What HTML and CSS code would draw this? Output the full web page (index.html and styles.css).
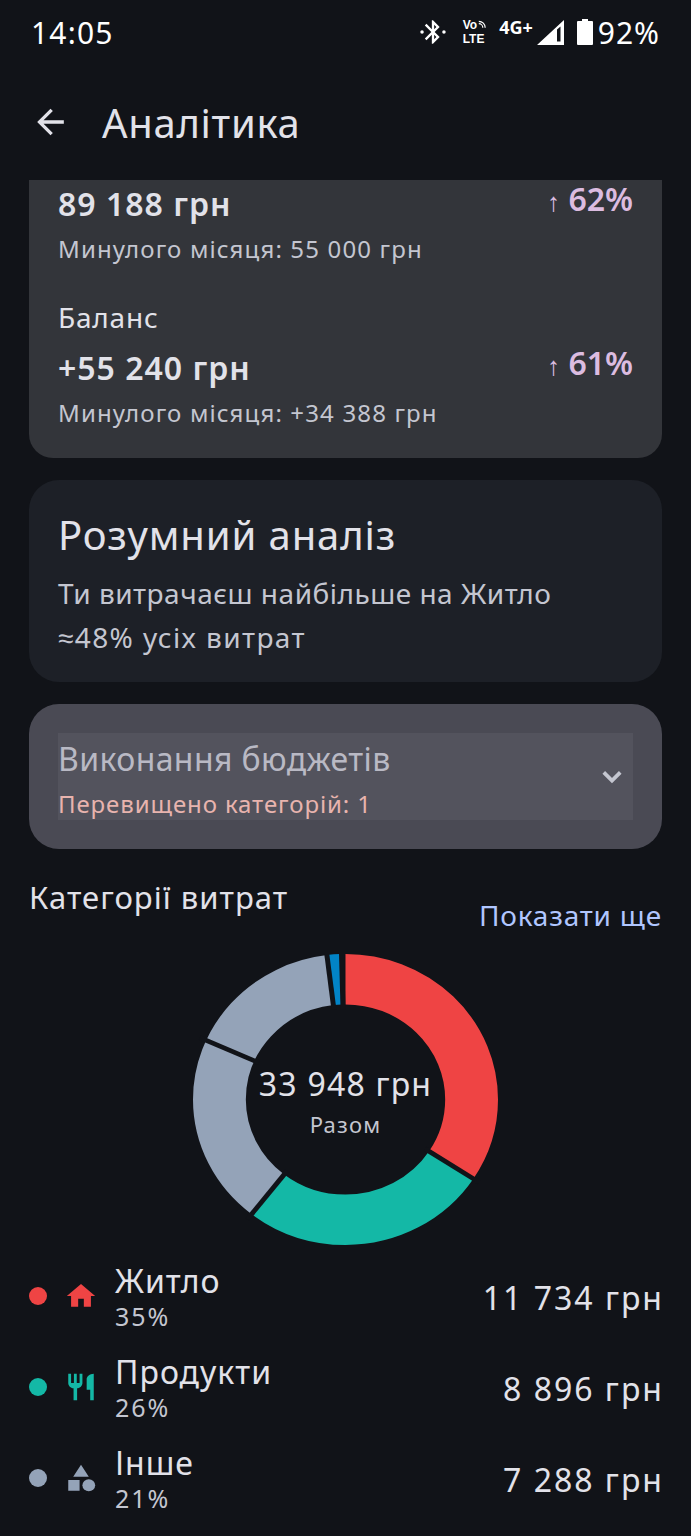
FILE: index.html
```html
<!DOCTYPE html>
<html lang="uk">

<head>
  <meta charset="utf-8">
  <link rel="stylesheet" href="styles.css">
  <title>Аналітика</title>
</head>

<body>
  <div class="status">
    <span class="clock">14:05</span>
    <div class="status-icons">
      <svg class="ic-bt" viewBox="0 0 24 24"><path d="M17.71 7.71L12 2h-1v7.59L6.41 5 5 6.41 10.59 12 5 17.59 6.41 19 11 14.41V22h1l5.71-5.71-4.3-4.29 4.3-4.29zM13 5.83l1.88 1.88L13 9.59V5.83zm1.88 10.46L13 18.17v-3.76l1.88 1.88z"/><circle cx="2.6" cy="12" r="1.5"/><circle cx="21.4" cy="12" r="1.5"/></svg>
      <span class="volte">Vo<svg class="ic-wave" viewBox="0 0 10 10"><path d="M1 4a5 5 0 0 1 5 5M1 1a8 8 0 0 1 8 8"/></svg><br>LTE</span>
      <span class="net">4G+</span>
      <svg class="ic-signal" viewBox="0 0 27 25"><path d="M0 25L27 0v25zM20 9.5L23.500 6.500v15H20z" fill-rule="evenodd"/></svg>
      <svg class="ic-batt" viewBox="0 0 16 26"><path d="M5 0h6v2h4a1 1 0 0 1 1 1v22a1 1 0 0 1-1 1H1a1 1 0 0 1-1-1V3a1 1 0 0 1 1-1h4z"/></svg>
      <span class="batt">92%</span>
    </div>
  </div>

  <div class="appbar">
    <svg class="back" viewBox="0 0 24 24"><path d="M20 11H7.83l5.59-5.59L12 4l-8 8 8 8 1.41-1.41L7.83 13H20v-2z"/></svg>
    <h1>Аналітика</h1>
  </div>

  <div class="content">
    <div class="card summary">
      <div class="sum-row cut">
        <div>
          <div class="sum-value">89 188 грн</div>
          <div class="sum-prev">Минулого місяця: 55 000 грн</div>
        </div>
        <div class="delta"><span class="arr">↑</span> 62%</div>
      </div>
      <div class="sum-row">
        <div>
          <div class="sum-label">Баланс</div>
          <div class="sum-value">+55 240 грн</div>
          <div class="sum-prev">Минулого місяця: +34 388 грн</div>
        </div>
        <div class="delta low"><span class="arr">↑</span> 61%</div>
      </div>
    </div>

    <div class="card smart">
      <h2>Розумний аналіз</h2>
      <p>Ти витрачаєш найбільше на Житло<br><span class="wide">≈48% усіх витрат</span></p>
    </div>

    <div class="card budget">
      <div class="budget-inner">
        <div>
          <div class="budget-title">Виконання бюджетів</div>
          <div class="budget-warn">Перевищено категорій: 1</div>
        </div>
        <svg class="chev" viewBox="0 0 24 24"><path d="M3 7l9 9 9-9" /></svg>
      </div>
    </div>

    <div class="cat-head">
      <span class="cat-title">Категорії витрат</span>
      <span class="cat-more">Показати ще</span>
    </div>

    <div class="donut">
      <svg viewBox="-153 -153 306 306" preserveAspectRatio="none">
        <g fill="none" stroke-width="53" transform="rotate(-90)">
          <circle r="126.5" pathLength="360" stroke="#ef4444" stroke-dasharray="123 237"/>
          <circle r="126.5" pathLength="360" stroke="#14b8a6" stroke-dasharray="95 265" stroke-dashoffset="-123"/>
          <circle r="126.5" pathLength="360" stroke="#94a3b8" stroke-dasharray="135 225" stroke-dashoffset="-218"/>
          <circle r="126.5" pathLength="360" stroke="#0284c7" stroke-dasharray="5 355" stroke-dashoffset="-353"/>
        </g>
        <g stroke="#111318" stroke-width="5">
          <line x1="0" y1="-95" x2="0" y2="-160" transform="rotate(123)"/>
          <line x1="0" y1="-95" x2="0" y2="-160" transform="rotate(218)"/>
          <line x1="0" y1="-95" x2="0" y2="-160" transform="rotate(294)"/>
          <line x1="0" y1="-95" x2="0" y2="-160" transform="rotate(353)"/>
          <line x1="0" y1="-95" x2="0" y2="-160" transform="rotate(358.500)"/>
        </g>
      </svg>
      <div class="donut-center">
        <div class="donut-sum">33 948 грн</div>
        <div class="donut-label">Разом</div>
      </div>
    </div>

    <div class="legend">
      <div class="leg-row">
        <span class="dot red"></span>
        <svg class="leg-ic red-ic" viewBox="0 0 24 24" preserveAspectRatio="none"><path d="M10 20v-6h4v6h5v-8h3L12 3 2 12h3v8z"/></svg>
        <div class="leg-text">
          <div class="leg-name">Житло</div>
          <div class="leg-pct">35%</div>
        </div>
        <div class="leg-sum">11 734 грн</div>
      </div>
      <div class="leg-row">
        <span class="dot teal"></span>
        <svg class="leg-ic teal-ic" viewBox="0 0 24 24" preserveAspectRatio="none"><path d="M11 9H9V2H7v7H5V2H3v7c0 2.12 1.66 3.84 3.75 3.97V22h2.5v-9.03C11.34 12.84 13 11.12 13 9V2h-2v7zm5-3v8h2.5v8H21V2c-2.76 0-5 2.24-5 4z"/></svg>
        <div class="leg-text">
          <div class="leg-name">Продукти</div>
          <div class="leg-pct">26%</div>
        </div>
        <div class="leg-sum">8 896 грн</div>
      </div>
      <div class="leg-row">
        <span class="dot gray"></span>
        <svg class="leg-ic gray-ic" viewBox="0 0 24 24" preserveAspectRatio="none"><path d="M12 2l-5.500 9h11zM3 13.500h8v8H3z"/><circle cx="17.500" cy="17.500" r="4.500"/></svg>
        <div class="leg-text">
          <div class="leg-name">Інше</div>
          <div class="leg-pct">21%</div>
        </div>
        <div class="leg-sum">7 288 грн</div>
      </div>
    </div>
  </div>
</body>

</html>
```

FILE: styles.css
```css
html,
body {
  margin: 0;
  height: 1536px;
  overflow: hidden;
  font-family: "Noto Sans", sans-serif;
  color: #e2e2e9;
  background-color: #111318;
}

/* status bar */
.status {
  height: 64px;
  display: flex;
  align-items: center;
  justify-content: space-between;
  padding: 0 31px;
  color: #fff;
}

.clock {
  font-size: 30px;
  letter-spacing: 1.2px;
}

.batt {
  font-size: 30px;
  letter-spacing: 1px;
}

.status-icons {
  display: flex;
  align-items: center;
}

.status-icons > svg {
  fill: #fff;
  display: block;
}

.ic-bt {
  width: 28px;
  height: 28px;
  margin-right: 16px;
}

.volte {
  font-family: "Liberation Sans", sans-serif;
  font-size: 12px;
  font-weight: 700;
  line-height: 14px;
  margin-right: 13px;
  white-space: nowrap;
}

.ic-wave {
  width: 8px;
  height: 9px;
  margin-left: 1px;
  fill: none;
  stroke: #fff;
  stroke-width: 1.5;
}

.net {
  font-size: 18px;
  font-weight: 700;
  margin-right: 4px;
  margin-top: -10px;
}

.ic-signal {
  width: 27px;
  height: 25px;
  margin-right: 13px;
}

.ic-batt {
  width: 16px;
  height: 26px;
  margin-right: 5px;
}

/* app bar */
.appbar {
  height: 116px;
  display: flex;
  align-items: center;
  padding-left: 30px;
}

.back {
  width: 41px;
  height: 40px;
  fill: #e2e2e9;
  margin-right: 31px;
}

h1 {
  margin: 0;
  font-size: 40px;
  font-weight: 400;
  letter-spacing: 0.7px;
}

/* cards */
.content {
  padding: 0 29px;
}

.card {
  border-radius: 30px;
  margin-bottom: 22px;
}

.summary {
  height: 278px;
  box-sizing: border-box;
  background: #33353a;
  border-radius: 0 0 24px 24px;
  padding: 0 29px;
}

.sum-row {
  display: flex;
  justify-content: space-between;
  align-items: center;
}

.sum-row.cut {
  margin-bottom: 33px;
}

.sum-label {
  font-size: 28px;
  letter-spacing: 0.8px;
  height: 45px;
}

.sum-value {
  font-size: 32px;
  font-weight: 600;
  letter-spacing: 1px;
  height: 50px;
  line-height: 50px;
  margin-top: -1px;
}

.sum-label + .sum-value {
  margin-top: 0;
}

.sum-prev {
  font-size: 24px;
  color: #c4c6d0;
  letter-spacing: 1.15px;
  margin-top: 3px;
}

.delta {
  font-size: 32px;
  line-height: 36px;
  font-weight: 600;
  color: #dcbce0;
  margin-top: -46px;
}

.delta.low {
  margin-top: 0;
}

.arr {
  font-size: 26px;
  font-weight: 500;
}

.smart {
  height: 202px;
  box-sizing: border-box;
  background: #1d2027;
  padding: 29px 29px 0;
}

.smart h2 {
  margin: 0 0 10px;
  font-size: 40px;
  font-weight: 400;
  letter-spacing: 0.9px;
  line-height: 52px;
}

.smart p {
  margin: 0;
  font-size: 28px;
  letter-spacing: 0.5px;
  line-height: 44px;
  color: #c4c6d0;
}

.wide {
  letter-spacing: 1.4px;
}

.budget {
  height: 145px;
  box-sizing: border-box;
  background: #4a4a54;
  padding: 29px;
}

.budget-inner {
  height: 87px;
  background: #53535d;
  display: flex;
  justify-content: space-between;
  align-items: center;
}

.budget-title {
  font-size: 32px;
  letter-spacing: 0.4px;
  line-height: 50px;
  margin-top: 2px;
  color: #b9b9c4;
}

.budget-warn {
  font-size: 24px;
  letter-spacing: 0.9px;
  line-height: 36px;
  margin-top: 2px;
  color: #e8b4ae;
}

.chev {
  width: 22px;
  height: 22px;
  margin-right: 10px;
  fill: none;
  stroke: #c4c6d0;
  stroke-width: 4;
}

/* categories */
.cat-head {
  height: 83px;
  display: flex;
  justify-content: space-between;
}

.cat-title {
  font-size: 31px;
  letter-spacing: 1px;
  line-height: 52px;
}

.cat-more {
  font-size: 28px;
  letter-spacing: 0.8px;
  line-height: 44px;
  color: #b0c6ff;
  margin-top: 22px;
}

.donut {
  position: relative;
  width: 305px;
  height: 291px;
  margin: 0 auto;
}

.donut svg {
  display: block;
  width: 100%;
  height: 100%;
}

.donut-center {
  position: absolute;
  inset: 5px 0 0;
  display: flex;
  flex-direction: column;
  align-items: center;
  justify-content: center;
}

.donut-sum {
  font-size: 32px;
  letter-spacing: 1.2px;
  line-height: 44px;
}

.donut-label {
  font-size: 22px;
  letter-spacing: 1.2px;
  line-height: 36px;
  color: #c4c6d0;
}

.legend {
  margin-top: 5px;
}

.leg-row {
  height: 91px;
  display: flex;
  align-items: center;
}

.dot {
  width: 18px;
  height: 18px;
  border-radius: 50%;
  margin-right: 17px;
}

.red { background: #ef4444; }
.teal { background: #14b8a6; }
.gray { background: #94a3b8; }

.leg-ic {
  width: 34px;
  height: 32px;
  margin-right: 17px;
}

.red-ic { fill: #ef4444; }
.teal-ic { fill: #14b8a6; }
.gray-ic { fill: #94a3b8; }

.leg-text {
  flex: 1;
}

.leg-name {
  font-size: 32px;
  line-height: 40px;
  letter-spacing: 1px;
}

.leg-pct {
  font-size: 25px;
  line-height: 30px;
  color: #c4c6d0;
  letter-spacing: 2px;
}

.leg-sum {
  font-size: 32px;
  letter-spacing: 2px;
  margin-top: 4px;
  margin-right: -2px;
}
```
